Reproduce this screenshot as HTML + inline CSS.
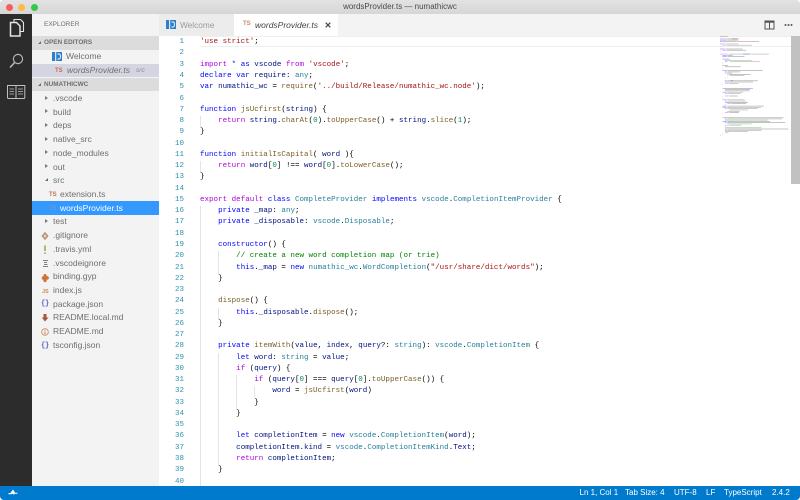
<!DOCTYPE html>
<html><head><meta charset="utf-8"><title>wordsProvider.ts — numathicwc</title>
<style>
html,body{margin:0;padding:0;width:800px;height:500px;overflow:hidden;background:#fff}
#w{position:absolute;left:0;top:0;width:800px;height:500px;overflow:hidden;border-radius:4px;font-family:"Liberation Sans",sans-serif;background:#fff;filter:blur(.3px)}
.a{position:absolute}
#tb{left:0;top:0;width:800px;height:14px;background:linear-gradient(#e2e2e2,#d6d6d6)}
#tt{left:0;width:800px;top:0;height:14px;line-height:14px;text-align:center;font-size:8px;color:#4a4a4a}
.dot{position:absolute;top:3.5px;width:7px;height:7px;border-radius:50%}
#ab{left:0;top:14px;width:31.5px;height:472px;background:#2c2c2c}
#sb{left:31.5px;top:14px;width:127.5px;height:472px;background:#f3f3f3}
#tabs{left:159px;top:14px;width:641px;height:22px;background:#f3f3f3}
.sec{position:absolute;left:31.5px;width:127.5px;height:13.5px;line-height:13.5px;background:#dcdcdc;font-size:6.4px;font-weight:bold;color:#6f6f6f}
.sec span{position:absolute;left:12.5px}
.sec i{position:absolute;left:6px;top:5px;width:0;height:0;border-style:solid;border-width:0 0 3px 3px;border-color:transparent transparent #6f6f6f transparent}
.r{position:absolute;font-size:8.5px;line-height:13.7px;height:13.7px;color:#6f6f6f;white-space:pre}
.ar{position:absolute;left:45px;width:0;height:0;border-style:solid;border-width:2.5px 0 2.5px 3px;border-color:transparent transparent transparent #7a7a7a}
.ard{position:absolute;left:45px;width:0;height:0;border-style:solid;border-width:0 0 3.5px 3.5px;border-color:transparent transparent #6a6a6a transparent}
.ic{position:absolute;font-size:6px;font-weight:bold;line-height:10px;white-space:pre}
.br{position:absolute;left:41px;font-size:7px;font-weight:bold;color:#5a5ac8;line-height:10px;letter-spacing:-.2px;font-family:"Liberation Mono",monospace}
#ln,#code{position:absolute;top:36px;margin:0;font-family:"Liberation Mono",monospace;font-size:7.5px;line-height:11.26px;white-space:pre}
#ln{left:160px;width:24px;text-align:right;color:#2b91af}
#code{left:200px;color:#000;letter-spacing:.02px}
#clip{left:159px;top:36px;width:641px;height:450px;overflow:hidden;background:#fff}
#clip #ln{top:1.2px;left:1px}
#clip #code{top:1.2px;left:41px}
.g{position:absolute;width:1px;background:#e4e4e4}
.k{color:#0000ff}.c{color:#af00db}.s{color:#a31515}.f{color:#795e26}.v{color:#001080}.t{color:#267f99}.m{color:#008000}.n{color:#09885a}
#st{left:0;top:486px;width:800px;height:14px;background:#007acc}
.si{position:absolute;top:486px;height:14px;line-height:14px;font-size:8px;color:#fff;white-space:pre}
</style></head><body><div id="w">

<div class="a" id="tb"></div>
<div class="a" id="tt">wordsProvider.ts — numathicwc</div>
<div class="dot" style="left:5.5px;background:#fc5b57"></div>
<div class="dot" style="left:18px;background:#fdbc40"></div>
<div class="dot" style="left:30.5px;background:#34c84a"></div>

<div class="a" id="ab"></div>
<svg class="a" style="left:0;top:14px" width="32" height="90" viewBox="0 0 32 90" fill="none" stroke="#e4e4e4">
<path d="M14 8.5V5.5H20.5L23.5 8.5V17.5H20" stroke-width="1.1"/>
<path d="M10.5 8.5H16.5L20 12V22H10.5Z" stroke-width="1.5"/>
<circle cx="18" cy="45" r="4.6" stroke="#b5b5b5" stroke-width="1.2"/>
<path d="M14.6 48.6L10 53.5" stroke="#b5b5b5" stroke-width="1.6"/>
<path d="M7.5 71.5H15.2Q16 71.5 16 72.5V84.5H8.5Q7.5 84.5 7.5 83.5ZM24.8 71.5H17Q16 71.5 16 72.5V84.5H24Q24.8 84.5 24.8 83.5Z" stroke="#c0c0c0" stroke-width="1"/>
<path d="M9.5 75H14M9.5 77.5H14M9.5 80H14M18 75H23M18 77.5H23M18 80H23" stroke="#c0c0c0" stroke-width=".8"/>
</svg>

<div class="a" id="sb"></div>
<div class="a" style="left:44px;top:14px;height:22px;line-height:22px;font-size:6.5px;color:#6f6f6f">EXPLORER</div>

<div class="sec" style="top:36px"><i></i><span>OPEN EDITORS</span></div>
<svg class="a" style="left:52px;top:52px" width="10" height="9" viewBox="0 0 10 9"><rect width="10" height="9" fill="#2f7fc8"/><rect x="3.2" width="1" height="9" fill="#fff"/><path d="M5.5 2H7.2Q8.4 2 8.4 4.5T7.2 7H5.5" fill="none" stroke="#fff" stroke-width=".9"/></svg>
<div class="r" style="left:66px;top:50px">Welcome</div>
<div class="a" style="left:31.5px;top:63.5px;width:127.5px;height:13.7px;background:#d5d5e2"></div>
<div class="ic" style="left:55px;top:65.5px;color:#c0714a">TS</div>
<div class="r" style="left:67px;top:63.5px;font-style:italic">wordsProvider.ts</div>
<div class="r" style="left:136px;top:63.5px;font-size:6.6px;font-style:italic;color:#8c8c8c">src</div>
<div class="sec" style="top:77.5px"><i></i><span>NUMATHICWC</span></div>
<div class="a" style="left:31.5px;top:201px;width:127.5px;height:13.5px;background:#3399ff"></div>

<div class="a" style="left:0;top:1px;width:160px;height:360px">
<div class="ar" style="top:94.5px"></div><div class="r" style="left:53px;top:91px">.vscode</div>
<div class="ar" style="top:108.2px"></div><div class="r" style="left:53px;top:104.7px">build</div>
<div class="ar" style="top:121.9px"></div><div class="r" style="left:53px;top:118.4px">deps</div>
<div class="ar" style="top:135.6px"></div><div class="r" style="left:53px;top:132.1px">native_src</div>
<div class="ar" style="top:149.3px"></div><div class="r" style="left:53px;top:145.8px">node_modules</div>
<div class="ar" style="top:163px"></div><div class="r" style="left:53px;top:159.5px">out</div>
<div class="ard" style="top:177px"></div><div class="r" style="left:53px;top:173.2px">src</div>
<div class="ic" style="left:49px;top:189px;color:#c0714a">TS</div><div class="r" style="left:60px;top:187px">extension.ts</div>
<div class="ic" style="left:49px;top:202.7px;color:#6a9ad8">TS</div><div class="r" style="left:60px;top:200.7px;color:#fff">wordsProvider.ts</div>
<div class="ar" style="top:217.9px"></div><div class="r" style="left:53px;top:214.4px">test</div>

<svg class="a" style="left:41px;top:230px" width="8" height="10" viewBox="0 0 8 10"><path d="M4 1.5L7 5L4 8.5L1 5Z" fill="#c9a48e" stroke="#b08a74" stroke-width=".8"/><circle cx="4" cy="5" r=".9" fill="#f3f3f3"/></svg>
<div class="r" style="left:53px;top:228.1px">.gitignore</div>
<svg class="a" style="left:41px;top:244px" width="8" height="10" viewBox="0 0 8 10"><path d="M4 .5V6M4 7.5V9" stroke="#7fa644" stroke-width="1.4"/></svg>
<div class="r" style="left:53px;top:241.8px">.travis.yml</div>
<svg class="a" style="left:41px;top:258px" width="8" height="10" viewBox="0 0 8 10"><path d="M2 1.5H7M3 3.5H6M3 5.5H6.5M2 7.5H7" stroke="#808080" stroke-width="1"/></svg>
<div class="r" style="left:53px;top:255.5px">.vscodeignore</div>
<svg class="a" style="left:41px;top:271.5px" width="8" height="10" viewBox="0 0 8 10"><path d="M4 1a1.6 1.6 0 0 1 1.5 2.2A1.8 1.8 0 1 1 5.5 6.6 1.7 1.7 0 1 1 2.5 6.8 1.8 1.8 0 1 1 2.5 3.2 1.6 1.6 0 0 1 4 1Z" fill="#d0733a"/></svg>
<div class="r" style="left:53px;top:269.2px">binding.gyp</div>
<div class="ic" style="left:42px;top:285.5px;color:#d58a52;font-size:5.5px">JS</div>
<div class="r" style="left:53px;top:282.9px">index.js</div>
<div class="br" style="top:298px">{}</div>
<div class="r" style="left:53px;top:296.6px">package.json</div>
<svg class="a" style="left:41px;top:312px" width="8" height="10" viewBox="0 0 8 10"><path d="M2.5 1H5.5V4.5H7.5L4 8.5L.8 4.5H2.5Z" fill="#a8573a"/></svg>
<div class="r" style="left:53px;top:310.3px">README.local.md</div>
<svg class="a" style="left:41px;top:326px" width="8" height="10" viewBox="0 0 8 10"><circle cx="4" cy="5" r="3.3" fill="none" stroke="#cf8a66" stroke-width=".9"/><path d="M4 2.8V3.6M4 4.5V7.2" stroke="#c9673f" stroke-width=".9"/></svg>
<div class="r" style="left:53px;top:324px">README.md</div>
<div class="br" style="top:339.5px">{}</div>
<div class="r" style="left:53px;top:337.7px">tsconfig.json</div>
</div>

<div class="a" id="tabs"></div>
<div class="a" style="left:159px;top:14px;width:75px;height:22px;background:#ececec"></div>
<svg class="a" style="left:166px;top:20px" width="10" height="9" viewBox="0 0 10 9"><rect width="10" height="9" fill="#2f7fc8"/><rect x="3.2" width="1" height="9" fill="#fff"/><path d="M5.5 2H7.2Q8.4 2 8.4 4.5T7.2 7H5.5" fill="none" stroke="#fff" stroke-width=".9"/></svg>
<div class="a" style="left:180px;top:14px;height:22px;line-height:22px;font-size:8.3px;color:#9a9a9a">Welcome</div>
<div class="a" style="left:234px;top:14px;width:104px;height:22px;background:#fff"></div>
<div class="a" style="left:243px;top:14px;height:22px;line-height:21px;font-size:6px;font-weight:bold;color:#c98a68">TS</div>
<div class="a" style="left:255px;top:14px;height:22px;line-height:22px;font-size:8.5px;font-style:italic;color:#444">wordsProvider.ts</div>
<svg class="a" style="left:324px;top:21px" width="8" height="8" viewBox="0 0 8 8"><path d="M1.7 1.7L6.3 6.3M6.3 1.7L1.7 6.3" stroke="#444" stroke-width="1.2"/></svg>
<svg class="a" style="left:764px;top:20px" width="12" height="10" viewBox="0 0 12 10" fill="none" stroke="#555"><rect x="1" y="1" width="9" height="8" stroke-width="1"/><path d="M1 2H10" stroke-width="1.6"/><path d="M5.5 1V9" stroke-width="1"/></svg>
<svg class="a" style="left:784px;top:23px" width="10" height="4" viewBox="0 0 10 4" fill="#555"><circle cx="1.5" cy="2" r="1"/><circle cx="4.5" cy="2" r="1"/><circle cx="7.5" cy="2" r="1"/></svg>

<div class="a" id="clip">
<div class="a" style="left:41px;top:0;width:591px;height:8.5px;border-top:1px solid #efefef;border-bottom:1px solid #efefef;box-sizing:content-box"></div>
<div class="g" style="left:41px;top:80px;height:11.3px"></div>
<div class="g" style="left:41px;top:125px;height:11.3px"></div>
<div class="g" style="left:41px;top:170px;height:280px"></div>
<div class="g" style="left:59px;top:215px;height:22.5px"></div>
<div class="g" style="left:59px;top:271.5px;height:11.3px"></div>
<div class="g" style="left:59px;top:316.5px;height:112.6px"></div>
<div class="g" style="left:77px;top:339px;height:33.8px"></div>
<div class="g" style="left:95px;top:350.2px;height:11.3px"></div>
<pre id="ln">1
2
3
4
5
6
7
8
9
10
11
12
13
14
15
16
17
18
19
20
21
22
23
24
25
26
27
28
29
30
31
32
33
34
35
36
37
38
39
40</pre>
<pre id="code"><span class="s">'use strict'</span>;

<span class="c">import</span> <span class="k">*</span> <span class="k">as</span> <span class="v">vscode</span> <span class="c">from</span> <span class="s">'vscode'</span>;
<span class="k">declare</span> <span class="k">var</span> <span class="v">require</span>: <span class="t">any</span>;
<span class="k">var</span> <span class="v">numathic_wc</span> = <span class="f">require</span>(<span class="s">'../build/Release/numathic_wc.node'</span>);

<span class="k">function</span> <span class="f">jsUcfirst</span>(<span class="v">string</span>) {
    <span class="c">return</span> <span class="v">string</span>.<span class="f">charAt</span>(<span class="n">0</span>).<span class="f">toUpperCase</span>() + <span class="v">string</span>.<span class="f">slice</span>(<span class="n">1</span>);
}

<span class="k">function</span> <span class="f">initialIsCapital</span>( <span class="v">word</span> ){
    <span class="c">return</span> <span class="v">word</span>[<span class="n">0</span>] !== <span class="v">word</span>[<span class="n">0</span>].<span class="f">toLowerCase</span>();
}

<span class="c">export</span> <span class="c">default</span> <span class="k">class</span> <span class="t">CompleteProvider</span> <span class="k">implements</span> <span class="t">vscode</span>.<span class="t">CompletionItemProvider</span> {
    <span class="k">private</span> <span class="v">_map</span>: <span class="t">any</span>;
    <span class="k">private</span> <span class="v">_disposable</span>: <span class="t">vscode</span>.<span class="t">Disposable</span>;

    <span class="k">constructor</span>() {
        <span class="m">// create a new word completion map (or trie)</span>
        <span class="k">this</span>.<span class="v">_map</span> = <span class="k">new</span> <span class="t">numathic_wc</span>.<span class="t">WordCompletion</span>(<span class="s">"/usr/share/dict/words"</span>);
    }

    <span class="f">dispose</span>() {
        <span class="k">this</span>.<span class="v">_disposable</span>.<span class="f">dispose</span>();
    }

    <span class="k">private</span> <span class="f">itemWith</span>(<span class="v">value</span>, <span class="v">index</span>, <span class="v">query</span>?: <span class="t">string</span>): <span class="t">vscode</span>.<span class="t">CompletionItem</span> {
        <span class="k">let</span> <span class="v">word</span>: <span class="t">string</span> = <span class="v">value</span>;
        <span class="c">if</span> (<span class="v">query</span>) {
            <span class="c">if</span> (<span class="v">query</span>[<span class="n">0</span>] === <span class="v">query</span>[<span class="n">0</span>].<span class="f">toUpperCase</span>()) {
                <span class="v">word</span> = <span class="f">jsUcfirst</span>(<span class="v">word</span>)
            }
        }

        <span class="k">let</span> <span class="v">completionItem</span> = <span class="k">new</span> <span class="t">vscode</span>.<span class="t">CompletionItem</span>(<span class="v">word</span>);
        <span class="v">completionItem</span>.<span class="v">kind</span> = <span class="t">vscode</span>.<span class="t">CompletionItemKind</span>.<span class="v">Text</span>;
        <span class="c">return</span> <span class="v">completionItem</span>;
    }

</pre>
</div>

<svg class="a" style="left:720px;top:36px" width="71" height="110" viewBox="0 0 71 110">
<g transform="translate(0,.3) scale(.61,1.27)" fill="none" stroke-width=".55" stroke-opacity=".38">
<path stroke="#a31515" d="M0 0h13M20 2h8M27 4h34M44 20h22"/>
<path stroke="#0000ff" d="M7 2h3M0 3h11M0 4h3M0 6h8M0 10h8M15 14h5M38 14h10M4 15h7M4 16h7M4 18h11M8 20h4M16 20h3M4 27h7M8 28h3M8 35h3M18 35h3M41 42h8M4 44h7M8 45h3M4 50h7M8 51h3M4 55h7M4 56h7M8 57h3M8 65h3M4 67h7M8 68h3M8 73h3"/>
<path stroke="#af00db" d="M0 2h6M4 7h6M4 11h6M0 14h14M8 29h2M12 30h2M8 37h6M8 47h6M12 53h6M8 60h6M8 70h6M8 76h6"/>
<path stroke="#008000" d="M8 19h45M8 66h70M8 72h60"/>
<path stroke="#333" d="M11 2h20M12 3h18M4 4h22M61 4h3M9 6h21M11 7h41M0 8h1M9 10h28M11 11h32M0 12h1M20 14h60M12 15h9M12 16h28M16 18h1M20 20h24M4 21h1M4 23h9M8 24h26M4 25h1M12 27h58M12 28h21M11 29h9M15 30h35M16 31h24M12 32h1M8 33h1M12 35h50M8 36h46M15 37h15M4 38h1M4 41h50M8 42h33M8 43h40M12 44h26M12 45h22M15 47h14M4 48h1M12 50h28M12 51h30M8 52h38M19 53h24M8 54h1M12 55h60M12 56h55M12 57h50M16 58h30M12 59h20M15 60h16M4 61h1M4 64h100M12 65h90M12 67h70M12 68h95M12 69h40M15 70h20M8 71h1M12 73h100M8 74h60M8 75h38M4 77h1M0 78h1"/>
</g>
</svg>
<div class="a" style="left:791px;top:36px;width:9px;height:148px;background:#c1c1c1"></div>

<div class="a" id="st"></div>
<svg class="a" style="left:8px;top:488px" width="10" height="10" viewBox="0 0 10 10"><path d="M.5 5H2.5L4 2.8L5 1.5L6 3L7 4.8H9.5V5.8H6.5L6 7L5 5.8H4.4L3.5 6.2H.5Z" fill="#fff"/></svg>
<div class="si" style="left:579.5px">Ln 1, Col 1</div>
<div class="si" style="left:625px">Tab Size: 4</div>
<div class="si" style="left:674px">UTF-8</div>
<div class="si" style="left:706px">LF</div>
<div class="si" style="left:724px">TypeScript</div>
<div class="si" style="left:772px">2.4.2</div>

</div></body></html>
